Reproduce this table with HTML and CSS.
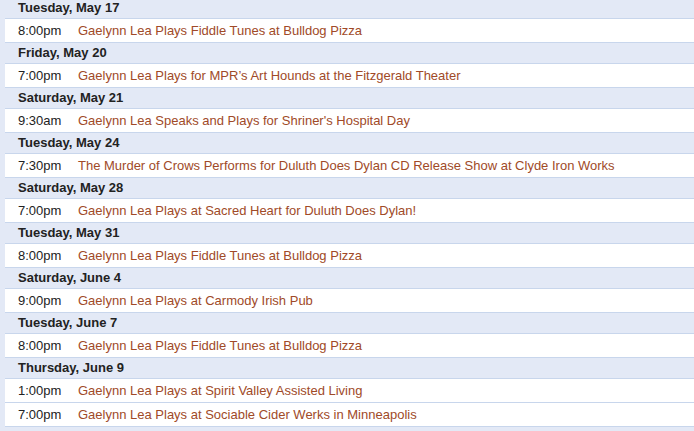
FILE: index.html
```html
<!DOCTYPE html>
<html>
<head>
<meta charset="utf-8">
<link rel="stylesheet" href="styles.css">
</head>
<body>
<div class="agenda">
  <div class="day">
    <div class="date">Tuesday, May 17</div>
    <div class="event"><span class="time">8:00pm</span><span class="title">Gaelynn Lea Plays Fiddle Tunes at Bulldog Pizza</span></div>
  </div>
  <div class="day">
    <div class="date">Friday, May 20</div>
    <div class="event"><span class="time">7:00pm</span><span class="title">Gaelynn Lea Plays for MPR’s Art Hounds at the Fitzgerald Theater</span></div>
  </div>
  <div class="day">
    <div class="date">Saturday, May 21</div>
    <div class="event"><span class="time">9:30am</span><span class="title">Gaelynn Lea Speaks and Plays for Shriner's Hospital Day</span></div>
  </div>
  <div class="day">
    <div class="date">Tuesday, May 24</div>
    <div class="event"><span class="time">7:30pm</span><span class="title">The Murder of Crows Performs for Duluth Does Dylan CD Release Show at Clyde Iron Works</span></div>
  </div>
  <div class="day">
    <div class="date">Saturday, May 28</div>
    <div class="event"><span class="time">7:00pm</span><span class="title">Gaelynn Lea Plays at Sacred Heart for Duluth Does Dylan!</span></div>
  </div>
  <div class="day">
    <div class="date">Tuesday, May 31</div>
    <div class="event"><span class="time">8:00pm</span><span class="title">Gaelynn Lea Plays Fiddle Tunes at Bulldog Pizza</span></div>
  </div>
  <div class="day">
    <div class="date">Saturday, June 4</div>
    <div class="event"><span class="time">9:00pm</span><span class="title">Gaelynn Lea Plays at Carmody Irish Pub</span></div>
  </div>
  <div class="day">
    <div class="date">Tuesday, June 7</div>
    <div class="event"><span class="time">8:00pm</span><span class="title">Gaelynn Lea Plays Fiddle Tunes at Bulldog Pizza</span></div>
  </div>
  <div class="day">
    <div class="date">Thursday, June 9</div>
    <div class="event"><span class="time">1:00pm</span><span class="title">Gaelynn Lea Plays at Spirit Valley Assisted Living</span></div>
    <div class="event"><span class="time">7:00pm</span><span class="title">Gaelynn Lea Plays at Sociable Cider Werks in Minneapolis</span></div>
  </div>
</div>
</body>
</html>
```
FILE: styles.css
```css
html, body {
  margin: 0;
  padding: 0;
  background: #e3e9f6;
  overflow: hidden;
}
body {
  font-family: "Liberation Sans", Arial, sans-serif;
  font-size: 13px;
  color: #222;
}
.agenda {
  margin-top: -2px;
}
.date {
  height: 20px;
  line-height: 20px;
  padding-left: 18px;
  font-weight: bold;
  color: #222;
}
.event {
  margin-left: 5px;
  height: 23px;
  line-height: 23px;
  padding-left: 13px;
  background: #fff;
  border-top: 1px solid #c8d6ec;
  display: flex;
  white-space: nowrap;
}
.event:last-child {
  border-bottom: 1px solid #c8d6ec;
}
.time {
  width: 60px;
  flex: none;
  color: #222;
}
.title {
  color: #a04a28;
}
```
